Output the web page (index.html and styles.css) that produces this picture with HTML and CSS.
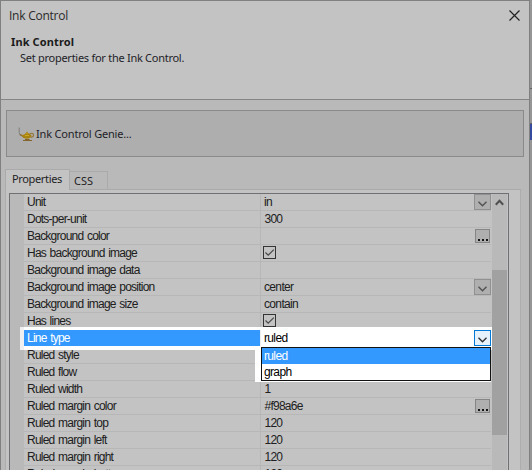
FILE: index.html
```html
<!DOCTYPE html>
<html lang="en">
<head>
<meta charset="utf-8">
<title>Ink Control</title>
<link rel="stylesheet" href="styles.css">
</head>
<body>
<div class="screen">
  <main class="window">
    <header class="head">
      <div class="titlebar">
        <span class="caption">Ink Control</span>
        <svg class="close" width="11" height="11" viewBox="0 0 11 11"><path d="M.5.5l10 10M10.5.5l-10 10"/></svg>
      </div>
      <h1>Ink Control</h1>
      <p>Set properties for the Ink Control.</p>
    </header>
    <div class="genie">
      <svg width="17" height="16" viewBox="0 0 17 16">
        <path class="smoke" d="M1.2 1.5v5l1 2.5"/>
        <path class="spout" d="M1.8 8.6l2.4 1 1.8 1.6"/>
        <circle class="handle" cx="13.6" cy="9.2" r="1.9"/>
        <path class="gold" d="M3.5 9.5L7 8c.5-1 1.4-1 1.7-2.2h.7C9.7 7 10.6 7 11.5 8l2 1.200c-.3 2.200-1.800 3.600-4.500 3.600S4.800 11.800 3.500 9.500z"/>
        <path class="shine" d="M7 9.500h4M9 7v1"/>
        <path class="base" d="M5 14.500h9M7 13.500h4.500"/>
      </svg>
      <span>Ink Control Genie...</span>
    </div>
    <nav class="tabs"><span class="tab on">Properties</span><span class="tab css">CSS</span><span class="rest"></span></nav>
    <section class="panel">
      <div class="grid">
        <div class="gutter"></div>
        <div class="rows">
          <div class="row"><span class="name">Unit</span><span class="val">in</span><span class="drop"><svg width="9" height="6" viewBox="0 0 9 6"><path d="M.5.8l4 4 4-4"/></svg></span></div>
          <div class="row"><span class="name">Dots-per-unit</span><span class="val num">300</span></div>
          <div class="row"><span class="name">Background color</span><span class="val"></span><span class="more"><i></i><i></i><i></i></span></div>
          <div class="row"><span class="name">Has background image</span><span class="val"><svg class="check" width="13" height="13" viewBox="0 0 13 13"><rect x=".5" y=".5" width="12" height="12"/><path d="M2.5 6.5l2.7 2.7 5.6-5.6"/></svg></span></div>
          <div class="row"><span class="name">Background image data</span><span class="val"></span></div>
          <div class="row"><span class="name">Background image position</span><span class="val">center</span><span class="drop"><svg width="9" height="6" viewBox="0 0 9 6"><path d="M.5.8l4 4 4-4"/></svg></span></div>
          <div class="row"><span class="name">Background image size</span><span class="val">contain</span></div>
          <div class="row"><span class="name">Has lines</span><span class="val"><svg class="check" width="13" height="13" viewBox="0 0 13 13"><rect x=".5" y=".5" width="12" height="12"/><path d="M2.5 6.5l2.7 2.7 5.6-5.6"/></svg></span></div>
          <div class="row active"><span class="name">Line type</span><span class="val">ruled</span><span class="drop"><svg width="9" height="6" viewBox="0 0 9 6"><path d="M.5.8l4 4 4-4"/></svg></span>
            <div class="menu"><div class="item on">ruled</div><div class="item">graph</div></div>
          </div>
          <div class="row"><span class="name">Ruled style</span><span class="val"></span></div>
          <div class="row"><span class="name">Ruled flow</span><span class="val"></span></div>
          <div class="row"><span class="name">Ruled width</span><span class="val num">1</span></div>
          <div class="row"><span class="name">Ruled margin color</span><span class="val num">#f98a6e</span><span class="more"><i></i><i></i><i></i></span></div>
          <div class="row"><span class="name">Ruled margin top</span><span class="val num">120</span></div>
          <div class="row"><span class="name">Ruled margin left</span><span class="val num">120</span></div>
          <div class="row"><span class="name">Ruled margin right</span><span class="val num">120</span></div>
          <div class="row"><span class="name">Ruled margin bottom</span><span class="val num">120</span></div>
        </div>
        <div class="scroll"><svg width="9" height="7" viewBox="0 0 9 7"><path d="M.8 5.7l3.7-4 3.7 4"/></svg><div class="thumb"></div></div>
      </div>
    </section>
  </main>
  <aside class="behind"><div class="band"></div><div class="blue"></div></aside>
</div>
</body>
</html>
```
FILE: styles.css
```css
* { box-sizing: border-box; }
body { margin: 0; overflow: hidden; font: 12px/16px "Liberation Sans", sans-serif; color: #202020; }
.screen { display: flex; width: 532px; height: 470px; overflow: hidden; }
.window { width: 530px; height: 470px; border: solid #808080; border-width: 1px 1px 0; background: #b9b9b9; overflow: hidden; }
.head { height: 99px; background: #c3c3c3; border-bottom: 1px solid #858585; font-family: "Noto Sans", sans-serif; }
.titlebar { display: flex; justify-content: space-between; height: 28px; padding: 6px 9px 0 8px; }
.caption { font: 12px/18px "Open Sans", sans-serif; letter-spacing: -.25px; color: #2a2a2a; }
.close { margin-top: 3px; fill: none; stroke: #222; stroke-width: 1.2; }
h1 { margin: 5px 0 0 10px; font-size: 11px; line-height: 16px; letter-spacing: .12px; color: #1b1b1b; }
p { margin: 0 0 0 19px; font-size: 11px; line-height: 16px; letter-spacing: -.27px; color: #1e1e28; }
.genie { display: flex; align-items: center; gap: 1px; width: 518px; height: 47px; margin: 10px 0 0 5px; padding: 1px 0 0 11px; border: 1px solid #8a8a8a; background: #aeaeae; font: 11px/16px "Noto Sans", sans-serif; letter-spacing: -.18px; color: #1e1e28; }
.smoke { fill: none; stroke: #807d7a; }
.spout { fill: none; stroke: #8c6a2c; stroke-width: 1.5; }
.handle { fill: none; stroke: #927030; stroke-width: 1.1; }
.gold { fill: #a98312; }
.shine { fill: none; stroke: #c9aa20; }
.base { fill: none; stroke: #86652a; }
.tabs { display: flex; align-items: flex-end; width: 516px; height: 21px; margin: 12px 0 0 4px; font: 11px/18px "Noto Sans", sans-serif; color: #1e1e24; }
.tab.on { width: 65px; height: 21px; padding: 0 0 0 6px; border: 1px solid #aaa; border-bottom: 0; background: #c3c3c3; letter-spacing: -.35px; }
.tab.css { width: 38px; height: 19px; padding: 0 0 0 4px; border: solid #aaa; border-width: 1px 1px 1px 0; line-height: 18px; }
.rest { flex: 1; height: 1px; background: #aaa; }
.panel { width: 516px; height: 300px; margin-left: 4px; padding: 3px 0 0 4px; border: solid #adadad; border-width: 0 1px; background: #c3c3c3; }
.grid { display: flex; width: 500px; height: 297px; border: 1px solid #707074; border-bottom: 0; margin-left: -1px; }
.gutter { width: 14px; background: #b9b9b9; }
.rows { width: 468px; }
.row { position: relative; display: flex; width: 467px; height: 17px; border-bottom: 1px solid #b7b7b7; }
.name { width: 237px; padding-left: 3px; border-right: 1px solid #b7b7b7; white-space: nowrap; letter-spacing: -.77px; word-spacing: 1px; }
.val { flex: 1; padding-left: 3px; letter-spacing: -.65px; }
.num { padding-left: 3.500px; letter-spacing: -.75px; }
.drop { display: flex; align-items: center; justify-content: center; width: 17px; height: 16px; border: 1px solid #909090; background: #afafaf; }
.drop svg { margin-top: 3px; fill: none; stroke: #525252; stroke-width: 1.4; }
.more { display: flex; align-items: flex-end; gap: 2px; width: 15px; height: 14px; margin: 1px 1px 0 0; padding: 0 0 1px 2px; border: 1px solid #858585; background: #afafaf; }
.more i { width: 2px; height: 2px; background: #151515; }
.check { display: block; margin: 1px 0 0 -1px; fill: none; stroke: #333; }
.check path { stroke: #4b4b4b; stroke-width: 1.3; }
.active { z-index: 2; border-bottom-color: #eee; color: #000; }
.active::before { content: ""; position: absolute; z-index: -1; inset: -3px -1px -4px -4px; background: linear-gradient(90deg, #f0f0f0 4px, #fff 4px); }
.active .name { background: #39f; color: #fff; border-right-color: #eee; }
.active .drop { border-color: #0078d7; background: #e5f1fb; }
.active .drop svg { stroke: #333; }
.menu { position: absolute; left: 237px; top: 17px; width: 230px; height: 34px; border: 1px solid #111; background: #fff; box-shadow: 0 1px #fff; }
.menu::before { content: ""; position: absolute; right: 100%; margin-right: 1px; top: -1px; width: 6px; height: 35px; background: #fff; }
.item { height: 16px; padding-left: 2px; letter-spacing: -.65px; }
.item.on { background: #39f; color: #fff; }
.scroll { width: 16px; background: linear-gradient(90deg, #b9b9b9 15px, #c3c3c3 15px); padding-right: 1px; }
.scroll svg { display: block; margin: 5px 0 0 3px; fill: none; stroke: #505050; stroke-width: 2; }
.thumb { height: 165px; margin-top: 64px; background: #a1a1a1; }
.behind { width: 2px; padding-top: 88px; background: #969696; }
.band { height: 36px; border: solid #666; border-width: 1px 0; }
.blue { height: 16px; background: #354b9e; }
```
